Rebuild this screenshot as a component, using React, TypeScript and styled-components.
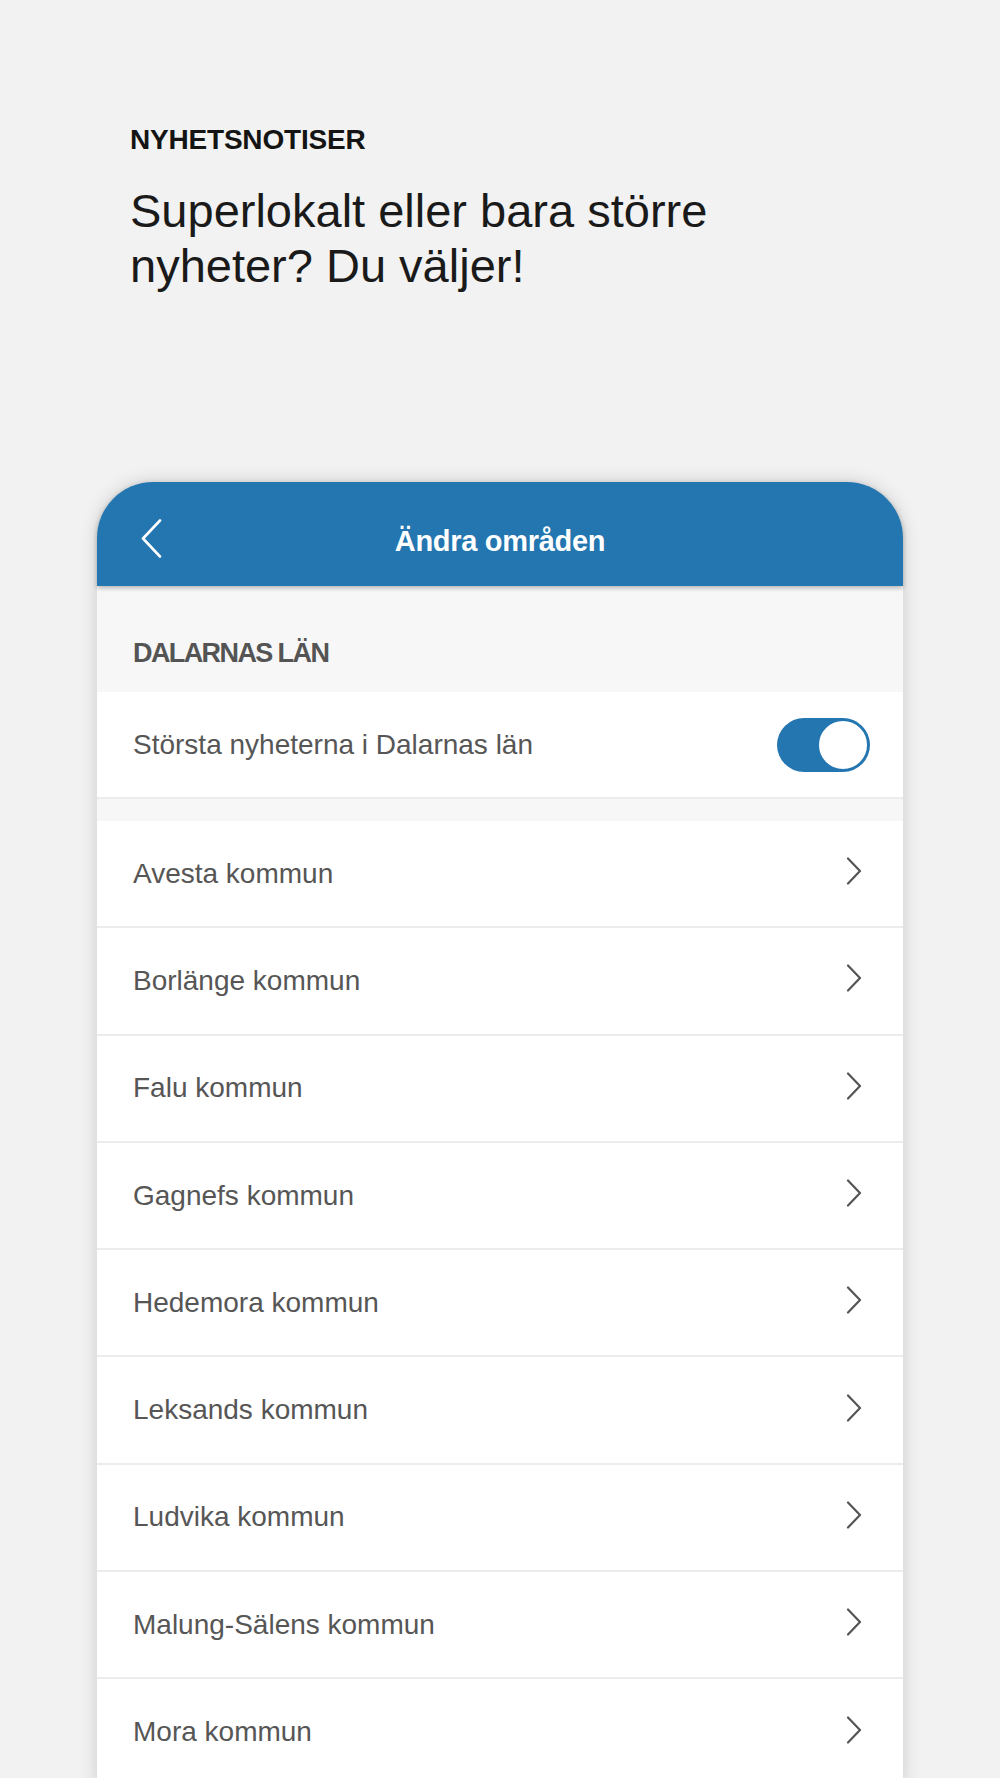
import React from "react";
import styled, { createGlobalStyle } from "styled-components";

const GlobalStyle = createGlobalStyle`
  html, body {
    margin: 0;
    padding: 0;
    background: #f2f2f2;
    overflow: hidden;
  }
  body {
    font-family: "Liberation Sans", Arial, sans-serif;
    -webkit-font-smoothing: antialiased;
  }
  * { box-sizing: border-box; }
`;

const BLUE = "#2476b0";

const Page = styled.div`
  height: 1778px;
  overflow: hidden;
  background: #f2f2f2;
  display: flex;
  flex-direction: column;
`;

const Intro = styled.header`
  padding: 123px 0 0 130px;
  display: flex;
  flex-direction: column;
`;

const Eyebrow = styled.div`
  font-size: 28px;
  line-height: 34px;
  font-weight: 700;
  color: #141414;
  letter-spacing: -0.2px;
`;

const Headline = styled.h1`
  margin: 26px 0 0;
  font-size: 47px;
  line-height: 55px;
  font-weight: 400;
  color: #1a1a1a;
  max-width: 640px;
`;

const Phone = styled.section`
  margin: 189px auto 0;
  width: 806px;
  flex: none;
  border-radius: 56px 56px 0 0;
  background: #f7f7f7;
  box-shadow: 0 0 18px rgba(0, 0, 0, 0.16);
  display: flex;
  flex-direction: column;
`;

const NavBar = styled.div`
  position: relative;
  z-index: 2;
  height: 104px;
  background: ${BLUE};
  border-radius: 56px 56px 0 0;
  display: grid;
  grid-template-columns: 1fr auto 1fr;
  align-items: start;
  box-shadow: 0 2px 5px rgba(0, 0, 0, 0.28);
`;

const BackButton = styled.button`
  justify-self: start;
  margin: 37px 0 0 44px;
  padding: 0;
  border: 0;
  background: none;
  width: 22px;
  height: 40px;
  display: block;
  cursor: pointer;
`;

const NavTitle = styled.div`
  margin-top: 45px;
  font-size: 29px;
  line-height: 29px;
  font-weight: 700;
  color: #ffffff;
  letter-spacing: -0.3px;
`;

const SectionTitle = styled.div`
  height: 106px;
  padding: 54px 0 0 36px;
  font-size: 27px;
  line-height: 27px;
  font-weight: 700;
  letter-spacing: -1.6px;
  color: #545454;
  background: #f7f7f7;
`;

const Group = styled.div<{ $gapBefore?: boolean }>`
  background: #ffffff;
  margin-top: ${(p) => (p.$gapBefore ? "22px" : "0")};
  display: flex;
  flex-direction: column;
`;

const Row = styled.div<{ $h: number }>`
  height: ${(p) => p.$h}px;
  padding: 0 33px 0 36px;
  display: flex;
  align-items: center;
  justify-content: space-between;
  border-bottom: 2px solid #ececec;
  background: #ffffff;
`;

const RowLabel = styled.span`
  font-size: 28px;
  line-height: 28px;
  color: #565656;
`;

const Chevron = styled.svg`
  width: 16px;
  height: 28px;
  margin-right: 8px;
  margin-top: -5px;
  flex: none;
`;

const Switch = styled.div<{ $on: boolean }>`
  width: 93px;
  height: 54px;
  border-radius: 27px;
  background: ${(p) => (p.$on ? BLUE : "#d9d9d9")};
  display: flex;
  align-items: center;
  justify-content: ${(p) => (p.$on ? "flex-end" : "flex-start")};
  padding: 1px;
  flex: none;
`;

const Knob = styled.div`
  width: 52px;
  height: 52px;
  border-radius: 50%;
  background: #ffffff;
  border: 2px solid ${BLUE};
`;

const municipalities = [
  "Avesta kommun",
  "Borlänge kommun",
  "Falu kommun",
  "Gagnefs kommun",
  "Hedemora kommun",
  "Leksands kommun",
  "Ludvika kommun",
  "Malung-Sälens kommun",
  "Mora kommun",
];

const ChevronRight = () => (
  <Chevron viewBox="0 0 16 28" aria-hidden>
    <path
      d="M2 1.5 L14 14 L2 26.5"
      fill="none"
      stroke="#555"
      strokeWidth="2.2"
      strokeLinecap="round"
      strokeLinejoin="round"
    />
  </Chevron>
);

export default function App() {
  return (
    <>
      <GlobalStyle />
      <Page>
        <Intro>
          <Eyebrow>NYHETSNOTISER</Eyebrow>
          <Headline>Superlokalt eller bara större nyheter? Du väljer!</Headline>
        </Intro>
        <Phone>
          <NavBar>
            <BackButton aria-label="Tillbaka">
              <svg width="22" height="40" viewBox="0 0 22 40">
                <path
                  d="M19 1.5 L2 19.5 L19 37.5"
                  fill="none"
                  stroke="#ffffff"
                  strokeWidth="2.6"
                  strokeLinecap="round"
                  strokeLinejoin="round"
                />
              </svg>
            </BackButton>
            <NavTitle>Ändra områden</NavTitle>
            <span />
          </NavBar>
          <SectionTitle>DALARNAS LÄN</SectionTitle>
          <Group>
            <Row $h={107}>
              <RowLabel>Största nyheterna i Dalarnas län</RowLabel>
              <Switch $on>
                <Knob />
              </Switch>
            </Row>
          </Group>
          <Group $gapBefore>
            {municipalities.map((m) => (
              <Row key={m} $h={107.3}>
                <RowLabel>{m}</RowLabel>
                <ChevronRight />
              </Row>
            ))}
          </Group>
        </Phone>
      </Page>
    </>
  );
}
